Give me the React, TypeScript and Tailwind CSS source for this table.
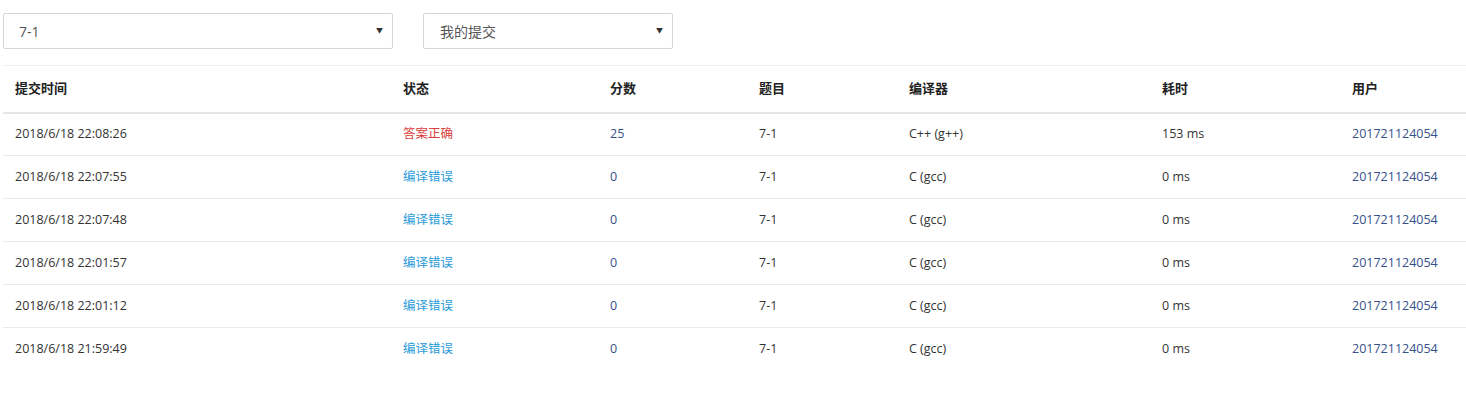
import React from "react";

interface Submission {
  time: string;
  status: string;
  ok: boolean;
  score: number;
  problem: string;
  compiler: string;
  cost: string;
  user: string;
}

const submissions: Submission[] = [
  { time: "2018/6/18 22:08:26", status: "答案正确", ok: true, score: 25, problem: "7-1", compiler: "C++ (g++)", cost: "153 ms", user: "201721124054" },
  { time: "2018/6/18 22:07:55", status: "编译错误", ok: false, score: 0, problem: "7-1", compiler: "C (gcc)", cost: "0 ms", user: "201721124054" },
  { time: "2018/6/18 22:07:48", status: "编译错误", ok: false, score: 0, problem: "7-1", compiler: "C (gcc)", cost: "0 ms", user: "201721124054" },
  { time: "2018/6/18 22:01:57", status: "编译错误", ok: false, score: 0, problem: "7-1", compiler: "C (gcc)", cost: "0 ms", user: "201721124054" },
  { time: "2018/6/18 22:01:12", status: "编译错误", ok: false, score: 0, problem: "7-1", compiler: "C (gcc)", cost: "0 ms", user: "201721124054" },
  { time: "2018/6/18 21:59:49", status: "编译错误", ok: false, score: 0, problem: "7-1", compiler: "C (gcc)", cost: "0 ms", user: "201721124054" },
];

const headers = ["提交时间", "状态", "分数", "题目", "编译器", "耗时", "用户"];
const colWidths = [388, 207, 149, 150, 253, 190, 126];

const SelectBox: React.FC<{ label: string; className: string }> = ({ label, className }) => (
  <div
    className={`h-[36px] flex items-center justify-between border border-[#d5d5d5] rounded-[2px] bg-white text-[14px] text-[#555] ${className}`}
  >
    <span>{label}</span>
    <span className="text-[7px] text-[#333] mr-[9px]">▼</span>
  </div>
);

export default function App() {
  return (
    <div
      className="w-[1466px] h-[393px] bg-white pl-[3px] pt-[13px] overflow-hidden"
      style={{ fontFamily: '"Open Sans", "Noto Sans CJK SC", sans-serif' }}
    >
      {/* filters */}
      <div className="flex gap-[30px]">
        <SelectBox label="7-1" className="w-[390px] pl-[15px]" />
        <SelectBox label="我的提交" className="w-[250px] pl-[16px]" />
      </div>

      {/* submissions table */}
      <table className="mt-[16px] w-[1463px] table-fixed border-collapse text-[12.5px] text-[#333]">
        <colgroup>
          {colWidths.map((w, i) => (
            <col key={i} style={{ width: w }} />
          ))}
        </colgroup>
        <thead>
          <tr className="h-[47px] border-t border-[#eeeeee] border-b-2 border-b-[#e6e6e6]">
            {headers.map((h) => (
              <th key={h} className="text-left font-bold text-[13px] text-[#222] px-[12px]">
                {h}
              </th>
            ))}
          </tr>
        </thead>
        <tbody>
          {submissions.map((s, i) => (
            <tr
              key={s.time}
              className={`h-[43px] ${i < submissions.length - 1 ? "border-b border-[#eaeaea]" : ""}`}
            >
              <td className="px-[12px] pt-[1px]">{s.time}</td>
              <td className={`px-[12px] pt-[1px] ${s.ok ? "text-[#d9413c]" : "text-[#2a9bd8]"}`}>{s.status}</td>
              <td className="px-[12px] pt-[1px] text-[#35508a]">{s.score}</td>
              <td className="px-[12px] pt-[1px]">{s.problem}</td>
              <td className="px-[12px] pt-[1px]">{s.compiler}</td>
              <td className="px-[12px] pt-[1px]">{s.cost}</td>
              <td className="px-[12px] pt-[1px] text-[#35508a]">{s.user}</td>
            </tr>
          ))}
        </tbody>
      </table>
    </div>
  );
}
